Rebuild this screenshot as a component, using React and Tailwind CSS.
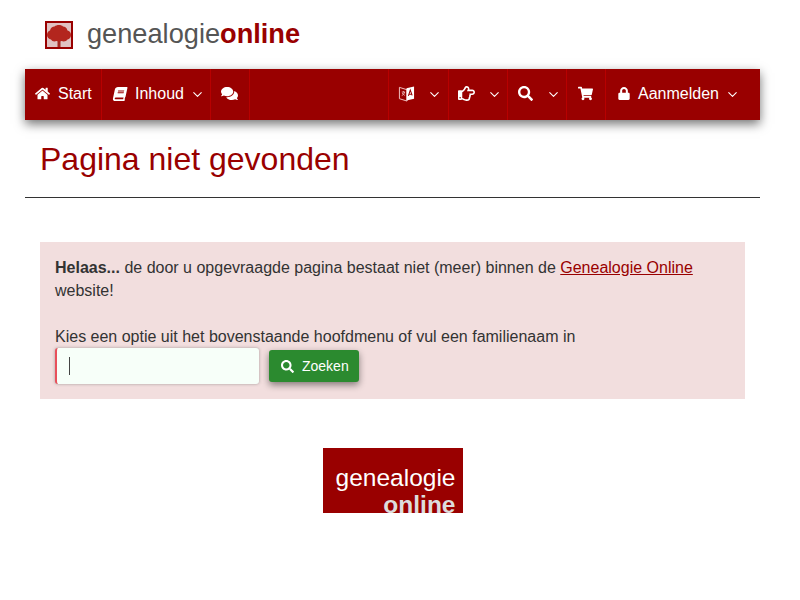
import { ChevronDown } from "lucide-react"
import {
  FaHome,
  FaBook,
  FaComments,
  FaRegHandPointRight,
  FaSearch,
  FaShoppingCart,
  FaLock,
} from "react-icons/fa"

const Chevron = ({ className = "" }) => (
  <ChevronDown className={`w-[15px] h-[15px] text-white ${className}`} strokeWidth={1.75} />
)

const NavItem = ({ className = "", children }) => (
  <div className={`h-full pb-[2px] flex items-center border-r border-[#b80000] ${className}`}>{children}</div>
)

const TreeLogo = () => (
  <div className="w-7 h-7 border-2 border-[#990000] bg-[#e0c2c2] shrink-0">
    <svg viewBox="0 0 24 24" className="w-full h-full">
      <path d="M10.500 14h3v10h-3z" fill="#a52a22" />
      <path
        d="M0 12c0-2.500 1.500-4 3-4.500C3.500 5 5.500 3.500 7.500 3.500 9.500 1.500 14.500 1.500 16 3.500c2 0 4 1.500 4.500 4 2 .5 3.500 2 3.500 4.500s-1.500 4-3.500 4.500c-1 2-4 2.500-6 1.500-1 .5-3.500.5-5 0-2 1-4.500.5-5.500-1.500C2 16 0 14.500 0 12z"
        fill="#b3261e"
      />
    </svg>
  </div>
)

const LanguageIcon = () => (
  <svg viewBox="0 0 18 18" className="w-[17px] h-[17px]">
    <path d="M1.500 2.500l8 2.500v12l-8-2.500z" fill="none" stroke="#f3c9c9" strokeWidth="1" />
    <path d="M4 7.500h3.500M5.700 6.500v1M7 7.500c-.5 2-1.700 3-3 3.700M4.500 8.500c.6 1.200 1.600 2 2.700 2.500" fill="none" stroke="#f3c9c9" strokeWidth="0.9" />
    <path d="M9 3.500l8-2v13l-8 2z" fill="#ffffff" />
    <path d="M11 11.500l2-6 2 5.500M11.800 9.800h2.500" fill="none" stroke="#990000" strokeWidth="1.100" />
  </svg>
)

export default function App() {
  return (
    <div className="w-[800px] h-[600px] bg-white overflow-hidden font-['Liberation_Sans',Arial,sans-serif] text-[#333333]">
      <div className="w-[735px] ml-[25px]">
        <div className="h-[69px] pl-5 flex items-center gap-[14px]">
          <TreeLogo />
          <div className="text-[27.2px] leading-none text-[#555555] pb-[2px]">
            genealogie<span className="font-bold text-[#990000]">online</span>
          </div>
        </div>

        <nav className="h-[51px] bg-[#990000] flex items-center text-white text-base shadow-[0_4px_10px_rgba(0,0,0,0.55)]">
          <NavItem className="w-[77px] pl-[10px] gap-2">
            <FaHome className="w-[15px] h-[15px]" />
            <span>Start</span>
          </NavItem>
          <NavItem className="w-[109px] pl-[11px]">
            <FaBook className="w-[14px] h-[14px] -skew-x-12" />
            <span className="ml-2">Inhoud</span>
            <Chevron className="ml-[6px] mt-[2px]" />
          </NavItem>
          <NavItem className="w-[39px] pl-[10px]">
            <FaComments className="w-[17px] h-[17px]" />
          </NavItem>
          <div className="w-[139px] h-full border-r border-[#b80000]" />
          <NavItem className="w-[60px] pl-[9px]">
            <LanguageIcon />
            <Chevron className="ml-[12px] mt-[2px]" />
          </NavItem>
          <NavItem className="w-[59px] pl-[9px]">
            <FaRegHandPointRight className="w-[17px] h-[17px]" />
            <Chevron className="ml-[12px] mt-[2px]" />
          </NavItem>
          <NavItem className="w-[59px] pl-[10px]">
            <FaSearch className="w-[15px] h-[15px]" />
            <Chevron className="ml-[13px] mt-[2px]" />
          </NavItem>
          <NavItem className="w-[39px] pl-[11px]">
            <FaShoppingCart className="w-[15px] h-[15px]" />
          </NavItem>
          <div className="h-full pb-[2px] flex items-center pl-[12px]">
            <FaLock className="w-[12px] h-[13px]" />
            <span className="ml-2">Aanmelden</span>
            <Chevron className="ml-[6px] mt-[2px]" />
          </div>
        </nav>

        <div className="h-[78px] border-b border-[#333333] pl-[15px] pt-[20px]">
          <h1 className="text-[32px] leading-[38px] font-normal text-[#990000]">Pagina niet gevonden</h1>
        </div>

        <div className="mx-[15px] mt-[44px] h-[157px] bg-[#f2dede] px-[15px] pt-[14px] text-base leading-[23px]">
          <p>
            <strong>Helaas...</strong> de door u opgevraagde pagina bestaat niet (meer) binnen de{" "}
            <a href="#" className="text-[#990000] underline">
              Genealogie Online
            </a>{" "}
            website!
          </p>
          <p className="mt-[23px]">Kies een optie uit het bovenstaande hoofdmenu of vul een familienaam in</p>
          <div className="flex items-center">
            <div className="w-[204px] h-9 bg-[#f7fff9] rounded-[3px] border-l-2 border-l-[#e8505b] shadow-[0_0_3px_rgba(80,80,80,0.5)] flex items-center pl-3">
              <div className="w-px h-[18px] bg-[#444444]" />
            </div>
            <button className="ml-[10px] w-[90px] h-8 bg-[#2b8a2f] rounded-[3px] text-white text-sm flex items-center pl-3 gap-2 shadow-[0_3px_7px_rgba(0,0,0,0.45)]">
              <FaSearch className="w-[13px] h-[13px]" />
              <span>Zoeken</span>
            </button>
          </div>
        </div>

        <div className="mt-[49px] flex justify-center">
          <div className="w-[140px] h-[65px] bg-[#990000] overflow-hidden pr-[7px] pt-[16px] flex flex-col items-end">
            <div className="text-[24.5px] leading-[28px] text-white">genealogie</div>
            <div className="text-[24.5px] leading-[26px] font-bold text-[#dddddd]">online</div>
          </div>
        </div>
      </div>
    </div>
  )
}
